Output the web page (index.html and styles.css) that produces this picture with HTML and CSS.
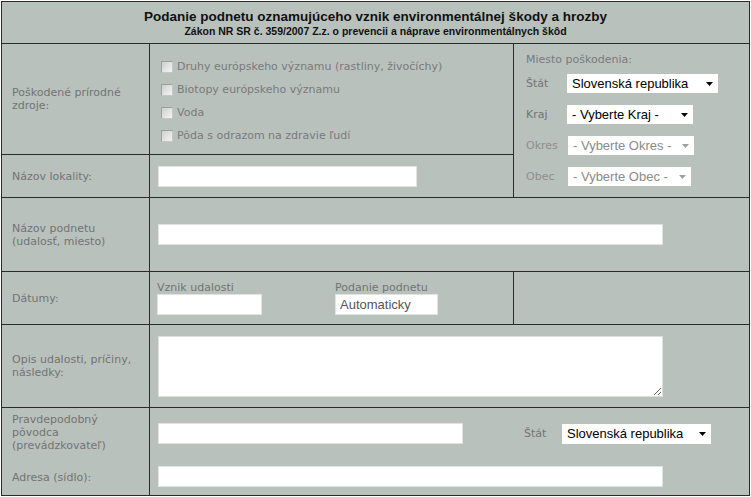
FILE: index.html
```html
<!DOCTYPE html>
<html lang="sk">
<head>
<meta charset="utf-8">
<title>Podanie podnetu</title>
<link rel="stylesheet" href="styles.css">
</head>
<body>
<div class="form">
  <div class="head">
    <div class="title">Podanie podnetu oznamujúceho vznik environmentálnej škody a hrozby</div>
    <div class="sub">Zákon NR SR č. 359/2007 Z.z. o prevencii a náprave environmentálnych škôd</div>
  </div>

  <div class="lbl">Poškodené prírodné<br>zdroje:</div>
  <div class="checks">
    <label class="check"><input type="checkbox" class="cb">Druhy európskeho významu (rastliny, živočíchy)</label>
    <label class="check"><input type="checkbox" class="cb">Biotopy európskeho významu</label>
    <label class="check"><input type="checkbox" class="cb">Voda</label>
    <label class="check"><input type="checkbox" class="cb">Pôda s odrazom na zdravie ľudí</label>
  </div>
  <div class="place">
    <div class="place-head">Miesto poškodenia:</div>
    <div class="place-row">
      <span class="place-lbl">Štát</span>
      <div class="select sel-state"><span>Slovenská republika</span><svg viewBox="0 0 7 4"><path d="M0 0H7L3.5 4Z"/></svg></div>
    </div>
    <div class="place-row">
      <span class="place-lbl">Kraj</span>
      <div class="select sel-kraj"><span>- Vyberte Kraj -</span><svg viewBox="0 0 7 4"><path d="M0 0H7L3.5 4Z"/></svg></div>
    </div>
    <div class="place-row">
      <span class="place-lbl off">Okres</span>
      <div class="select sel-okres off"><span>- Vyberte Okres -</span><svg viewBox="0 0 7 4"><path d="M0 0H7L3.5 4Z"/></svg></div>
    </div>
    <div class="place-row">
      <span class="place-lbl off">Obec</span>
      <div class="select sel-obec off"><span>- Vyberte Obec -</span><svg viewBox="0 0 7 4"><path d="M0 0H7L3.5 4Z"/></svg></div>
    </div>
  </div>

  <div class="lbl">Názov lokality:</div>
  <div class="cell"><input type="text" class="field w-lok"></div>

  <div class="lbl">Názov podnetu<br>(udalosť, miesto)</div>
  <div class="cell wide"><input type="text" class="field w-full"></div>

  <div class="lbl">Dátumy:</div>
  <div class="dates">
    <div class="date-col">
      <span class="date-lbl">Vznik udalosti</span>
      <input type="text" class="field w-d1">
    </div>
    <div class="date-col">
      <span class="date-lbl">Podanie podnetu</span>
      <input type="text" class="field w-d2" value="Automaticky">
    </div>
  </div>
  <div class="cell"></div>

  <div class="lbl">Opis udalosti, príčiny,<br>následky:</div>
  <div class="cell wide"><textarea class="area"></textarea></div>

  <div class="lbl stack">Pravdepodobný<br>pôvodca<br>(prevádzkovateľ)<span class="addr">Adresa (sídlo):</span></div>
  <div class="orig wide">
    <div class="orig-top">
      <input type="text" class="field w-pov">
      <span class="orig-lbl">Štát</span>
      <div class="select sel-state2"><span>Slovenská republika</span><svg viewBox="0 0 7 4"><path d="M0 0H7L3.5 4Z"/></svg></div>
    </div>
    <input type="text" class="field w-full addr-field">
  </div>
</div>
</body>
</html>
```

FILE: styles.css
```css
body {
  margin: 0;
  background: #ffffff;
  font-family: "DejaVu Sans", Verdana, sans-serif;
  font-size: 11px;
}

.form {
  display: grid;
  grid-template-columns: 147px 363px 235px;
  grid-template-rows: 41px 110px 42px 73px 52px 82px 87px;
  gap: 1px;
  padding: 1px;
  margin: 1px 0 0 1px;
  width: max-content;
  background: #2a2c2b;
}

.form > div {
  background: #b9c1bd;
}

.head {
  grid-column: 1 / -1;
  text-align: center;
  font-family: "Liberation Sans", Arial, sans-serif;
  font-weight: bold;
  color: #111;
  padding-top: 6px;
}

.title {
  font-size: 13.5px;
  line-height: 17px;
}

.sub {
  font-size: 10.5px;
  line-height: 13px;
}

.lbl {
  display: flex;
  align-items: center;
  padding-left: 10px;
  color: #737373;
  line-height: 13px;
}

.lbl.stack {
  display: block;
  padding-top: 5px;
}

.addr {
  display: block;
  margin-top: 19px;
}

.cell {
  display: flex;
  align-items: center;
  padding-left: 8px;
}

.wide {
  grid-column: 2 / 4;
}

.checks {
  display: flex;
  flex-direction: column;
  align-items: flex-start;
  padding: 11px 0 0 11px;
}

.check {
  display: flex;
  align-items: center;
  height: 23px;
  color: #7a7a7a;
}

.cb {
  appearance: none;
  -webkit-appearance: none;
  width: 12px;
  height: 12px;
  margin: 0 4px 0 0;
  border: 1px solid #9c9f9e;
  border-right-color: #c4c7c5;
  border-bottom-color: #c4c7c5;
  box-sizing: border-box;
  background: linear-gradient(135deg, #cdd0ce 0%, #f4f4f4 100%);
}

.place {
  grid-row: span 2;
  display: flex;
  flex-direction: column;
  padding: 9px 0 0 12px;
}

.place-head {
  line-height: 13px;
  color: #7a7a7a;
  margin-bottom: 8px;
}

.place-row {
  display: flex;
  align-items: center;
  height: 19px;
  margin-bottom: 12px;
}

.place-lbl {
  width: 41px;
  color: #737373;
}

.place-lbl.off {
  width: 42px;
  color: #8e8e8e;
}

.select {
  display: flex;
  align-items: center;
  justify-content: space-between;
  box-sizing: border-box;
  height: 19px;
  padding: 0 5px 0 5px;
  background: #fff;
  font-family: "Liberation Sans", Arial, sans-serif;
  font-size: 13px;
  color: #000;
}

.select svg {
  width: 7px;
  height: 4px;
  fill: #000;
}

.select.off {
  color: #8a8a8a;
}

.select.off svg {
  fill: #a0a0a0;
}

.sel-state { width: 151px; }
.sel-kraj { width: 126px; }
.sel-okres { width: 126px; }
.sel-obec { width: 123px; }
.sel-state2 { width: 149px; height: 20px; }

.field {
  box-sizing: border-box;
  height: 21px;
  margin: 0;
  padding: 0 4px;
  border: 1px solid #e0e3e1;
  background: #fff;
  font-family: "Liberation Sans", Arial, sans-serif;
  font-size: 13px;
  color: #555;
  outline: none;
}

.w-lok { width: 259px; }
.w-full { width: 505px; }
.w-d1 { width: 105px; }
.w-d2 { width: 103px; }
.w-pov { width: 305px; }

.dates {
  display: flex;
  gap: 73px;
  padding: 9px 0 0 7px;
}

.date-col {
  display: flex;
  flex-direction: column;
}

.date-lbl {
  line-height: 13px;
  color: #737373;
}

.area {
  box-sizing: border-box;
  width: 505px;
  height: 61px;
  margin: 0;
  border: 1px solid #dcdfdd;
  background: #fff;
  font-family: "Liberation Sans", Arial, sans-serif;
  font-size: 13px;
}

.orig {
  display: flex;
  flex-direction: column;
  padding: 15px 0 0 8px;
}

.orig-top {
  display: flex;
  align-items: center;
  height: 21px;
}

.orig-lbl {
  margin-left: 61px;
  width: 38px;
  color: #737373;
}

.addr-field {
  margin-top: 22px;
}
```
